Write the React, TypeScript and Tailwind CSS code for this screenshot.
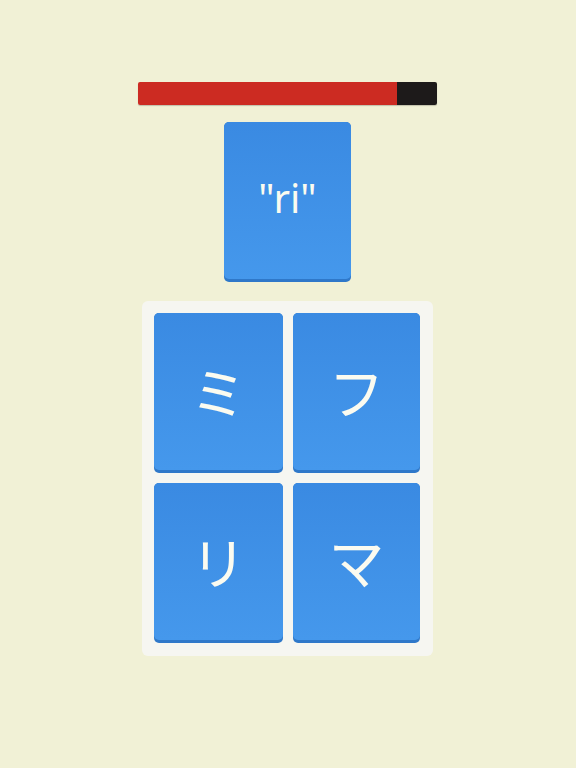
const choices = ["ミ", "フ", "リ", "マ"];

function Tile({ label }: { label: string }) {
	return (
		<div className="h-[160px] rounded-[5px] bg-[#2f78c9] pb-[3px]">
			<div className="h-full w-full rounded-[5px] bg-gradient-to-b from-[#3a8ae2] to-[#4598ec] flex items-center justify-center text-[#fbfbf0] text-[56px] font-normal">
				{label}
			</div>
		</div>
	);
}

export default function App(): JSX.Element {
	return (
		<div
			className="w-[576px] h-[768px] bg-[#f1f1d6] flex flex-col items-center"
			style={{ fontFamily: '"Noto Sans", "Noto Sans CJK JP", sans-serif' }}
		>
			{/* timer */}
			<div className="mt-[82px] ml-[-1px] w-[299px] h-[23px] flex rounded-[2px] overflow-hidden shadow-[0_1px_1px_rgba(0,0,0,0.2)]">
				<div className="w-[259px] bg-[#cc2b22]" />
				<div className="flex-1 bg-[#1d1a1a]" />
			</div>

			{/* prompt */}
			<div className="mt-[17px] ml-[-1px] w-[127px] h-[160px] rounded-[5px] bg-[#2f78c9] pb-[3px]">
				<div className="h-full w-full rounded-[5px] bg-gradient-to-b from-[#3a8ae2] to-[#4598ec] flex items-center justify-center text-[#fbfbf0] text-[40px] pb-[6px]">
					"ri"
				</div>
			</div>

			{/* answers */}
			<div className="mt-[19px] ml-[-1px] w-[291px] pl-[12px] pr-[13px] pt-[12px] pb-[13px] rounded-[6px] bg-[#f6f6f1] grid grid-cols-[129px_127px] gap-[10px]">
				{choices.map((c) => (
					<Tile key={c} label={c} />
				))}
			</div>
		</div>
	);
}
